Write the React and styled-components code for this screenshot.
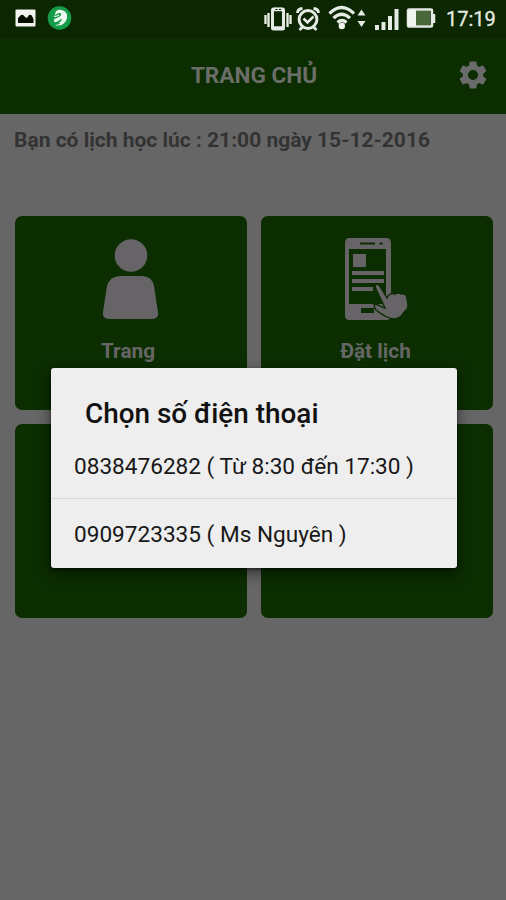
import React from "react";
import styled, { createGlobalStyle } from "styled-components";

const Global = createGlobalStyle`
  * { box-sizing: border-box; }
  body { margin: 0; background: #666; font-family: Roboto, "Noto Sans", sans-serif; }
`;

const Screen = styled.div`
  position: relative;
  width: 506px;
  height: 900px;
  overflow: hidden;
  background: #666;
`;

const StatusBar = styled.header`
  display: flex;
  justify-content: space-between;
  height: 38px;
  background: #0b2600;
`;

const StatusIcons = styled.svg`
  display: block;
  width: ${(p) => p.$width}px;
  height: 38px;
`;

const StatusRight = styled.div`
  display: flex;
  width: 246px;
`;

const Clock = styled.span`
  color: #e6eae4;
  font-size: 20px;
  line-height: 39px;
  -webkit-text-stroke: 0.3px #e6eae4;
  white-space: nowrap;
`;

const TitleBar = styled.div`
  display: grid;
  grid-template-columns: 60px 1fr 60px;
  align-items: center;
  height: 76px;
  background: #0b2d00;
`;

const Title = styled.h1`
  grid-column: 2;
  margin: 0;
  padding-left: 2px;
  color: #6a6d68;
  font-size: 22.6px;
  font-weight: 700;
  line-height: 26px;
  text-align: center;
  white-space: nowrap;
`;

const GearIcon = styled.svg`
  width: 34px;
  height: 34px;
  margin: -2px 0 0 10px;
  fill: #6a6b6a;
`;

const Notice = styled.p`
  height: 102px;
  margin: 0;
  padding: 12px 0 0 14px;
  border-top: 1px solid #65656b;
  color: #333;
  font-size: 21px;
  font-weight: 700;
  line-height: 26px;
  white-space: nowrap;
`;

const TileGrid = styled.main`
  display: grid;
  grid-template-columns: 232px 232px;
  grid-auto-rows: 194px;
  gap: 14px;
  padding-left: 14.5px;
`;

const Tile = styled.section`
  display: flex;
  flex-direction: column;
  align-items: center;
  padding-top: 18px;
  border-radius: 7px;
  background: #0b2d00;
`;

const TileIcon = styled.svg`
  width: 80px;
  height: 92px;
  fill: #666466;
`;

const TileLabel = styled.div`
  width: ${(p) => p.$width}px;
  margin: 12px ${(p) => p.$shift}px 0 0;
  color: #666;
  font-size: 20.8px;
  font-weight: 700;
  line-height: 26px;
  text-align: center;
`;

const Dialog = styled.div`
  position: absolute;
  left: 51px;
  top: 368px;
  width: 406px;
  height: 200px;
  border-radius: 3px;
  background: #eee;
  box-shadow: 0 5px 14px rgba(0, 0, 0, 0.5), 0 1px 3px rgba(0, 0, 0, 0.5);
`;

const DialogTitle = styled.h2`
  height: 63px;
  margin: 0;
  padding: 30px 0 0 34px;
  color: #111;
  font-size: 27.9px;
  font-weight: 500;
  line-height: 32px;
  white-space: nowrap;
`;

const Choice = styled.div`
  height: 68px;
  padding: 21px 0 0 23px;
  border-bottom: ${(p) => (p.$divided ? "1px solid #d9d9d9" : "none")};
  color: #181818;
  font-size: 22.6px;
  line-height: 30px;
  white-space: nowrap;
`;

function LeftStatus() {
  return (
    <StatusIcons $width={90} viewBox="0 0 90 38">
      <rect x="15.5" y="9.5" width="20" height="17" rx="1" fill="#f2f5ef" />
      <path d="M18 23v-5l3-3q2-1 4 2l2 1 2-3q2-1 3 1l1.5 3v4Z" fill="#071000" />
      <circle cx="59.5" cy="18" r="11.8" fill="#159c49" />
      <path d="M58 10c6-1 10 3 9 8s-6 9-12 7c5 0 7-3 7-5s-3-1-5 1-3 1-3-1 6-2 7-5-3-2-6 0c0-3 1-4 3-5Z" fill="#edf8ef" />
      <path d="M60 11q5 3 4 7t-4 6" fill="none" stroke="#edf8ef" strokeWidth="3" />
      <path d="M54 16q2 1 5-1M54 21q3 1 6-2" fill="none" stroke="#edf8ef" strokeWidth="1.3" />
    </StatusIcons>
  );
}

function RightStatus() {
  return (
    <StatusIcons $width={186} viewBox="260 0 186 38" fill="none" stroke="#e6eae4">
      <path d="M265.5 15v9M268.5 13v14M287.5 13v14M290.5 15v9" strokeWidth="2.4" />
      <rect x="272.5" y="9" width="11" height="20" rx="1" strokeWidth="3" />
      <path d="M274 28h8M274 9.5h8" strokeWidth="3.5" />
      <path d="M275.5 9.5h2M279 9.5h2" stroke="#0b2600" />
      <circle cx="308" cy="19.5" r="8.9" strokeWidth="3" />
      <path d="m303.5 18.5 4 4 6-6" strokeWidth="2.6" />
      <path d="M297.5 13q0-4 5-4.500M318.500 13q0-4-5-4.500M302.500 27l-3 3M313.500 27l3 3" strokeWidth="2.800" />
      <path d="M329.500 13.500q12-12 24.500 0M333.500 18.200q8-8 16.500 0M337.500 22.500q4.500-4 9 0" strokeWidth="3.200" />
      <circle cx="341.800" cy="26" r="3.200" fill="#f2f5ef" stroke="none" />
      <path d="M357.500 15.500h8l-4-6ZM357.500 21h8l-4 6Z" fill="#e6eae4" stroke="none" />
      <path d="M377 30v-5M383.500 30v-8M390 30V16M396.500 30V9" strokeWidth="4" />
      <rect x="408" y="9.500" width="24" height="17" rx="1" strokeWidth="2.500" />
      <path d="M408 10h8v16h-8Z" fill="#f2f5ef" stroke="none" />
      <path d="M416 11h14v14h-14Z" fill="#48683c" stroke="none" />
      <path d="M434 14v9" strokeWidth="2.500" />
    </StatusIcons>
  );
}

function PersonIcon() {
  return (
    <TileIcon viewBox="91 234 80 92">
      <circle cx="131" cy="255.500" r="16.300" />
      <path d="M120 276h22q10 0 12 10l4 26q1 7-6 7h-43q-7 0-6-7l4-26q3-10 13-10Z" />
    </TileIcon>
  );
}

function PhoneIcon() {
  return (
    <TileIcon viewBox="337 234 80 92">
      <path fillRule="evenodd" d="M349 238h37q5 0 5 5v72q0 5-5 5h-37q-4 0-4-5v-72q0-5 4-5Zm0 11v55h37v-55Z" />
      <path d="M360 243.500h15M379.500 243.500h3" stroke="#0b2d00" strokeWidth="2" />
      <path d="M361 308h13v5h-13Z" fill="#0b2d00" />
      <path d="M353 254h13v13h-13ZM352 271h32v4h-32ZM352 279h32v4h-32ZM352 287h21v4h-21Z" />
      <path d="M377 284c2 0 3 2 4 4l6 10c1-4 5-5 8-4q4-2 6 0 5-1 6 4l1 8q0 3-4 6-3 6-9 7c-7 0-14-5-19-9q-2-3-2-6c4 0 7 3 11 4l-9-19q-2-4 1-5Z" stroke="#0b2d00" strokeWidth="1.400" />
    </TileIcon>
  );
}

export default function App() {
  return (
    <>
      <Global />
      <Screen>
        <StatusBar>
          <LeftStatus />
          <StatusRight>
            <RightStatus />
            <Clock>17:19</Clock>
          </StatusRight>
        </StatusBar>
        <TitleBar>
          <Title>TRANG CHỦ</Title>
          <GearIcon viewBox="0 0 24 24">
            <path d="M19.14 12.94c.04-.3.06-.61.06-.94s-.02-.64-.07-.94l2.030-1.580a.49.49 0 0 0 .12-.61l-1.920-3.320a.488.488 0 0 0-.59-.22l-2.390.96c-.5-.38-1.030-.7-1.620-.94l-.36-2.540a.484.484 0 0 0-.48-.41h-3.840c-.24 0-.43.17-.47.41l-.36 2.540c-.59.24-1.130.57-1.620.94l-2.390-.96c-.22-.08-.47 0-.59.22L2.740 8.870c-.12.21-.08.47.12.61l2.030 1.580c-.05.3-.09.63-.09.94s.02.64.07.94l-2.030 1.580a.49.49 0 0 0-.12.61l1.920 3.320c.12.22.37.29.59.22l2.390-.96c.5.38 1.030.7 1.620.94l.36 2.540c.05.24.24.41.48.41h3.840c.24 0 .44-.17.47-.41l.36-2.540c.59-.24 1.130-.56 1.620-.94l2.390.96c.22.08.47 0 .59-.22l1.920-3.320c.12-.22.07-.47-.12-.61l-2.010-1.580ZM12 15.600A3.600 3.600 0 1 1 12 8.400a3.600 3.600 0 0 1 0 7.200Z" />
          </GearIcon>
        </TitleBar>
        <Notice>Bạn có lịch học lúc : 21:00 ngày 15-12-2016</Notice>
        <TileGrid>
          <Tile>
            <PersonIcon />
            <TileLabel $width={78} $shift={5}>Trang cá nhân</TileLabel>
          </Tile>
          <Tile>
            <PhoneIcon />
            <TileLabel $width={90} $shift={2}>Đặt lịch học</TileLabel>
          </Tile>
          <Tile />
          <Tile />
        </TileGrid>
        <Dialog role="dialog">
          <DialogTitle>Chọn số điện thoại</DialogTitle>
          <Choice $divided>0838476282 ( Từ 8:30 đến 17:30 )</Choice>
          <Choice>0909723335 ( Ms Nguyên )</Choice>
        </Dialog>
      </Screen>
    </>
  );
}
